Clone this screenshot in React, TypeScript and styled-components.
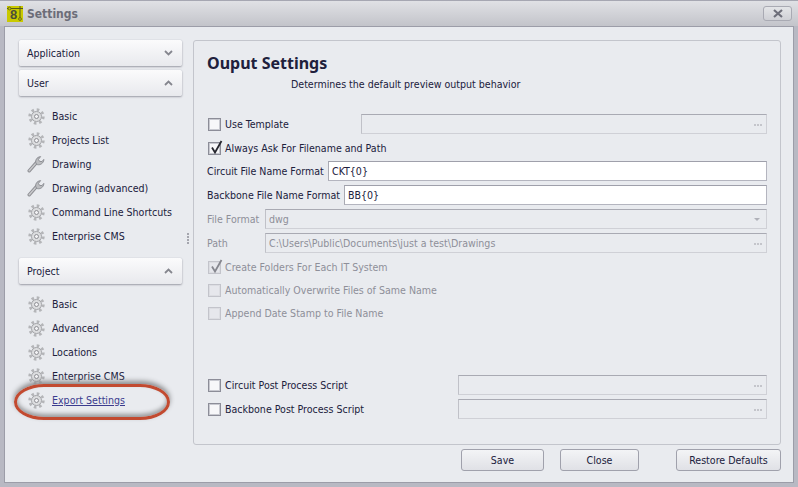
import React from 'react'
import styled, { createGlobalStyle } from 'styled-components'

const GlobalStyle = createGlobalStyle`
  html, body {
    margin: 0;
    padding: 0;
    background: #e9ebef;
  }
  body {
    font-family: 'DejaVu Sans Condensed', 'DejaVu Sans', 'Liberation Sans', sans-serif;
    font-stretch: condensed;
    font-size: 10.55px;
    color: #20203c;
  }
`

const GearIcon = () => (
  <svg width="17" height="17" viewBox="0 0 17 17">
    <circle cx="8.5" cy="8.5" r="6.8" fill="none" stroke="#b4b5b8" strokeWidth="2.8" strokeDasharray="2.6 2.74" />
    <circle cx="8.5" cy="8.5" r="5" fill="#dcdddf" stroke="#a3a4a8" strokeWidth="1" />
    <circle cx="8.5" cy="8.5" r="2" fill="#f2f2f4" stroke="#8f9095" strokeWidth="1" />
  </svg>
)

const WrenchIcon = () => (
  <svg width="18" height="18" viewBox="0 0 18 18">
    <path d="M2.2 15.8 L9.6 7.4" stroke="#8f9095" strokeWidth="3.4" strokeLinecap="round" />
    <path d="M2.2 15.8 L9.6 7.4" stroke="#c9cacd" strokeWidth="1.4" strokeLinecap="round" />
    <path
      d="M9 8.6 C7.9 5.6 9.6 2 13.6 1.6 L11.4 4.4 L12.6 6.4 L15 6.6 L16.8 4.4 C17 8 13.2 10.4 10.4 9.6 Z"
      fill="#bcbdc0"
      stroke="#86888d"
      strokeWidth="0.9"
    />
  </svg>
)

const Chevron = ({ up }: { up?: boolean }) => (
  <svg width="9" height="6" viewBox="0 0 9 6">
    <path d={up ? 'M1 5 L4.5 1.6 L8 5' : 'M1 1 L4.5 4.4 L8 1'} fill="none" stroke="#85868e" strokeWidth="1.8" />
  </svg>
)

const Check = () => (
  <CheckMark width="14" height="15" viewBox="0 0 14 15">
    <path d="M3 7.5 L6 12.5 L12.5 1" fill="none" stroke="currentColor" strokeWidth="1.8" />
  </CheckMark>
)

const Ellipsis = () => (
  <Dots>
    <i />
    <i />
    <i />
  </Dots>
)

const userItems = [
  { label: 'Basic', icon: 'gear' },
  { label: 'Projects List', icon: 'gear' },
  { label: 'Drawing', icon: 'wrench' },
  { label: 'Drawing (advanced)', icon: 'wrench' },
  { label: 'Command Line Shortcuts', icon: 'gear' },
  { label: 'Enterprise CMS', icon: 'gear' },
]

const projectItems = [
  { label: 'Basic', icon: 'gear' },
  { label: 'Advanced', icon: 'gear' },
  { label: 'Locations', icon: 'gear' },
  { label: 'Enterprise CMS', icon: 'gear' },
  { label: 'Export Settings', icon: 'gear', link: true },
]

type NavEntry = { label: string; icon: string; link?: boolean }

const NavList = ({ items }: { items: NavEntry[] }) => (
  <Items>
    {items.map((item) => (
      <Item key={item.label}>
        <IconSlot>{item.icon === 'gear' ? <GearIcon /> : <WrenchIcon />}</IconSlot>
        <ItemLabel $link={item.link}>{item.label}</ItemLabel>
      </Item>
    ))}
  </Items>
)

export default function App() {
  return (
    <Window>
      <GlobalStyle />
      <TitleBar>
        <AppIcon>
          <AppIconLines width="16" height="16" viewBox="0 0 16 16">
            <path d="M0 2.5 H16 M13 0 V12" stroke="#55581a" strokeWidth="1" fill="none" />
            <circle cx="2.5" cy="2.5" r="1.4" fill="#c9c900" stroke="#55581a" strokeWidth="0.8" />
            <circle cx="13" cy="13" r="1.4" fill="#c9c900" stroke="#55581a" strokeWidth="0.8" />
          </AppIconLines>
          <AppIconDigit>8</AppIconDigit>
        </AppIcon>
        <TitleText>Settings</TitleText>
        <CloseButton>
          <svg width="10" height="9" viewBox="0 0 10 9">
            <path d="M1 1 L9 8 M9 1 L1 8" stroke="#6e6f7a" strokeWidth="2.2" />
          </svg>
        </CloseButton>
      </TitleBar>

      <Body>
        <Top>
          <Sidebar>
            <GroupHeader>
              Application
              <Chevron />
            </GroupHeader>
            <GroupHeader $gap={4}>
              User
              <Chevron up />
            </GroupHeader>
            <NavList items={userItems} />
            <GroupHeader $gap={10}>
              Project
              <Chevron up />
            </GroupHeader>
            <NavList items={projectItems} />
            <Callout />
          </Sidebar>

          <Splitter>
            <i />
            <i />
            <i />
            <i />
          </Splitter>

          <Panel>
            <Heading>Ouput Settings</Heading>
            <Subheading>Determines the default preview output behavior</Subheading>

            <Row $top={22}>
              <CheckField>
                <Box />
                Use Template
              </CheckField>
              <Field $left={361} $disabled>
                <Ellipsis />
              </Field>
            </Row>
            <Row $top={4}>
              <CheckField>
                <Box>
                  <Check />
                </Box>
                Always Ask For Filename and Path
              </CheckField>
            </Row>
            <Row $top={3}>
              <FieldLabel>Circuit File Name Format</FieldLabel>
              <Field $left={328}>CKT{'{0}'}</Field>
            </Row>
            <Row $top={4}>
              <FieldLabel>Backbone File Name Format</FieldLabel>
              <Field $left={344}>BB{'{0}'}</Field>
            </Row>
            <Row $top={4}>
              <FieldLabel $disabled>File Format</FieldLabel>
              <Field $left={265} $disabled>
                dwg
                <SelectArrow />
              </Field>
            </Row>
            <Row $top={4}>
              <FieldLabel $disabled>Path</FieldLabel>
              <Field $left={265} $disabled>
                C:\Users\Public\Documents\just a test\Drawings
                <Ellipsis />
              </Field>
            </Row>
            <Row $top={4}>
              <CheckField $disabled>
                <Box $disabled>
                  <Check />
                </Box>
                Create Folders For Each IT System
              </CheckField>
            </Row>
            <Row $top={3}>
              <CheckField $disabled>
                <Box $disabled />
                Automatically Overwrite Files of Same Name
              </CheckField>
            </Row>
            <Row $top={3}>
              <CheckField $disabled>
                <Box $disabled />
                Append Date Stamp to File Name
              </CheckField>
            </Row>

            <Row $top={52}>
              <CheckField>
                <Box />
                Circuit Post Process Script
              </CheckField>
              <Field $left={458} $disabled>
                <Ellipsis />
              </Field>
            </Row>
            <Row $top={4}>
              <CheckField>
                <Box />
                Backbone Post Process Script
              </CheckField>
              <Field $left={458} $disabled>
                <Ellipsis />
              </Field>
            </Row>
          </Panel>
        </Top>

        <Footer>
          <Button $width={83}>Save</Button>
          <Button $width={79} $gap={16}>
            Close
          </Button>
          <Button $width={105} $gap={37}>
            Restore Defaults
          </Button>
        </Footer>
      </Body>
    </Window>
  )
}

const Window = styled.div`
  width: 798px;
  height: 487px;
  box-sizing: border-box;
  display: flex;
  flex-direction: column;
  overflow: hidden;
  background: #b8b9c3;
  border-top: 1px solid #a6a7b2;
`

const TitleBar = styled.div`
  height: 25px;
  flex: none;
  display: flex;
  align-items: center;
  padding: 0 6px 0 7px;
  background: linear-gradient(#e0e1e5, #c3c4ca);
`

const AppIcon = styled.div`
  position: relative;
  width: 16px;
  height: 16px;
  background: #c9c900;
`

const AppIconLines = styled.svg`
  position: absolute;
  inset: 0;
`

const AppIconDigit = styled.span`
  position: absolute;
  left: 3px;
  top: 2px;
  font: bold 13px/14px 'Liberation Sans', sans-serif;
  color: #4b4d3a;
`

const TitleText = styled.div`
  margin-left: 4px;
  font-weight: 700;
  font-size: 12px;
  color: #6c6d78;
`

const CloseButton = styled.div`
  margin-left: auto;
  width: 29px;
  height: 15px;
  box-sizing: border-box;
  display: flex;
  align-items: center;
  justify-content: center;
  border: 1px solid #a9aab3;
  border-radius: 3px;
  background: linear-gradient(#e4e5e8, #cfd0d5);
`

const Body = styled.div`
  flex: 1;
  margin: 0 4px 4px;
  padding: 13px 12px 0 14px;
  border: 1px solid #9c9da8;
  background: #e9ebef;
  display: flex;
  flex-direction: column;
  min-height: 0;
`

const Top = styled.div`
  display: flex;
  height: 405px;
  flex: none;
`

const Sidebar = styled.div`
  position: relative;
  width: 163px;
  flex: none;
`

const GroupHeader = styled.div<{ $gap?: number }>`
  height: 26px;
  box-sizing: border-box;
  margin-top: ${(p) => p.$gap ?? 0}px;
  padding: 0 9px 0 8px;
  display: flex;
  align-items: center;
  justify-content: space-between;
  background: linear-gradient(#fbfbfc, #e8e9ed);
  border-radius: 2px;
  box-shadow: 0 1px 2px #9b9ca6, 0 0 1px #b5b6bf;
`

const Items = styled.div`
  padding-top: 8px;
  display: flex;
  flex-direction: column;
`

const Item = styled.div`
  height: 24px;
  display: flex;
  align-items: center;
  padding-left: 8px;
`

const IconSlot = styled.span`
  width: 18px;
  height: 18px;
  display: flex;
  align-items: center;
  justify-content: center;
  margin-right: 7px;
`

const ItemLabel = styled.span<{ $link?: boolean }>`
  white-space: nowrap;
  color: ${(p) => (p.$link ? '#3b3b8e' : '#20203c')};
  text-decoration: ${(p) => (p.$link ? 'underline' : 'none')};
`

const Callout = styled.div`
  position: absolute;
  left: -5px;
  top: 344px;
  width: 156px;
  height: 36px;
  box-sizing: border-box;
  border: 3.5px solid #c24a30;
  border-radius: 30px / 18px;
  box-shadow: 0 -3px 5px #8d8e90, inset 0 -3px 4px #9a9b9d;
  pointer-events: none;
`

const Splitter = styled.div`
  width: 11px;
  flex: none;
  display: flex;
  flex-direction: column;
  align-items: center;
  justify-content: center;
  gap: 1px;
  padding-bottom: 8px;

  i {
    width: 2px;
    height: 2px;
    background: #a5a6ae;
  }
`

const Panel = styled.div`
  flex: 1;
  box-sizing: border-box;
  padding: 12px 13px 0;
  border: 1px solid #c3c5cc;
  border-radius: 3px;
  display: flex;
  flex-direction: column;
  min-width: 0;
`

const Heading = styled.div`
  font-family: 'Noto Sans', 'Liberation Sans', sans-serif;
  font-stretch: normal;
  font-weight: 700;
  font-size: 16px;
  line-height: 21px;
  color: #20203c;
`

const Subheading = styled.div`
  margin-left: 84px;
  margin-top: 2px;
  line-height: 16px;
  white-space: nowrap;
`

const Row = styled.div<{ $top: number }>`
  position: relative;
  height: 20px;
  margin-top: ${(p) => p.$top}px;
  display: flex;
  align-items: center;
  flex: none;
`

const CheckField = styled.div<{ $disabled?: boolean }>`
  display: flex;
  align-items: center;
  white-space: nowrap;
  padding-left: 1px;
  color: ${(p) => (p.$disabled ? '#8e8f99' : '#20203c')};
`

const Box = styled.span<{ $disabled?: boolean }>`
  position: relative;
  width: 13px;
  height: 13px;
  margin-right: 4px;
  flex: none;
  box-sizing: border-box;
  border: 1px solid ${(p) => (p.$disabled ? '#c3c4cb' : '#8c8d98')};
  background: ${(p) => (p.$disabled ? '#e6e7ec' : '#f7f7f9')};
  box-shadow: inset 0 0 0 1px ${(p) => (p.$disabled ? '#dcdde2' : '#c8c9d0')};
  color: ${(p) => (p.$disabled ? '#85868e' : '#26262e')};
`

const CheckMark = styled.svg`
  position: absolute;
  left: 0;
  top: -3px;
`

const FieldLabel = styled.span<{ $disabled?: boolean }>`
  white-space: nowrap;
  color: ${(p) => (p.$disabled ? '#8e8f99' : '#20203c')};
`

/* $left is where the box starts in the window, the panel content starts at 207 */
const Field = styled.div<{ $left: number; $disabled?: boolean }>`
  position: absolute;
  left: ${(p) => p.$left - 207}px;
  right: 0;
  top: 0;
  bottom: 0;
  box-sizing: border-box;
  padding: 0 3px;
  display: flex;
  align-items: center;
  white-space: nowrap;
  background: ${(p) => (p.$disabled ? '#e9ebef' : '#ffffff')};
  border: 1px solid ${(p) => (p.$disabled ? '#cfd0d6' : '#b4b5bf')};
  border-top-color: ${(p) => (p.$disabled ? '#a9aab3' : '#9fa0ab')};
  border-left-color: ${(p) => (p.$disabled ? '#c0c1c8' : '#a9aab3')};
  color: ${(p) => (p.$disabled ? '#8e8f99' : '#20203c')};
`

const Dots = styled.span`
  margin-left: auto;
  margin-right: 1px;
  display: flex;
  gap: 1px;
  padding-top: 1px;

  i {
    width: 2px;
    height: 2px;
    background: #c4c5cb;
  }
`

const SelectArrow = styled.span`
  margin-left: auto;
  margin-right: 3px;
  width: 0;
  height: 0;
  border-left: 3px solid transparent;
  border-right: 3px solid transparent;
  border-top: 3px solid #b0b1b9;
`

const Footer = styled.div`
  display: flex;
  justify-content: flex-end;
  padding-top: 4px;
`

const Button = styled.div<{ $width: number; $gap?: number }>`
  width: ${(p) => p.$width}px;
  height: 22px;
  margin-left: ${(p) => p.$gap ?? 0}px;
  box-sizing: border-box;
  display: flex;
  align-items: center;
  justify-content: center;
  border: 1px solid #a0a1ac;
  border-radius: 3px;
  background: linear-gradient(#f3f4f6, #e0e1e6);
  white-space: nowrap;
`
